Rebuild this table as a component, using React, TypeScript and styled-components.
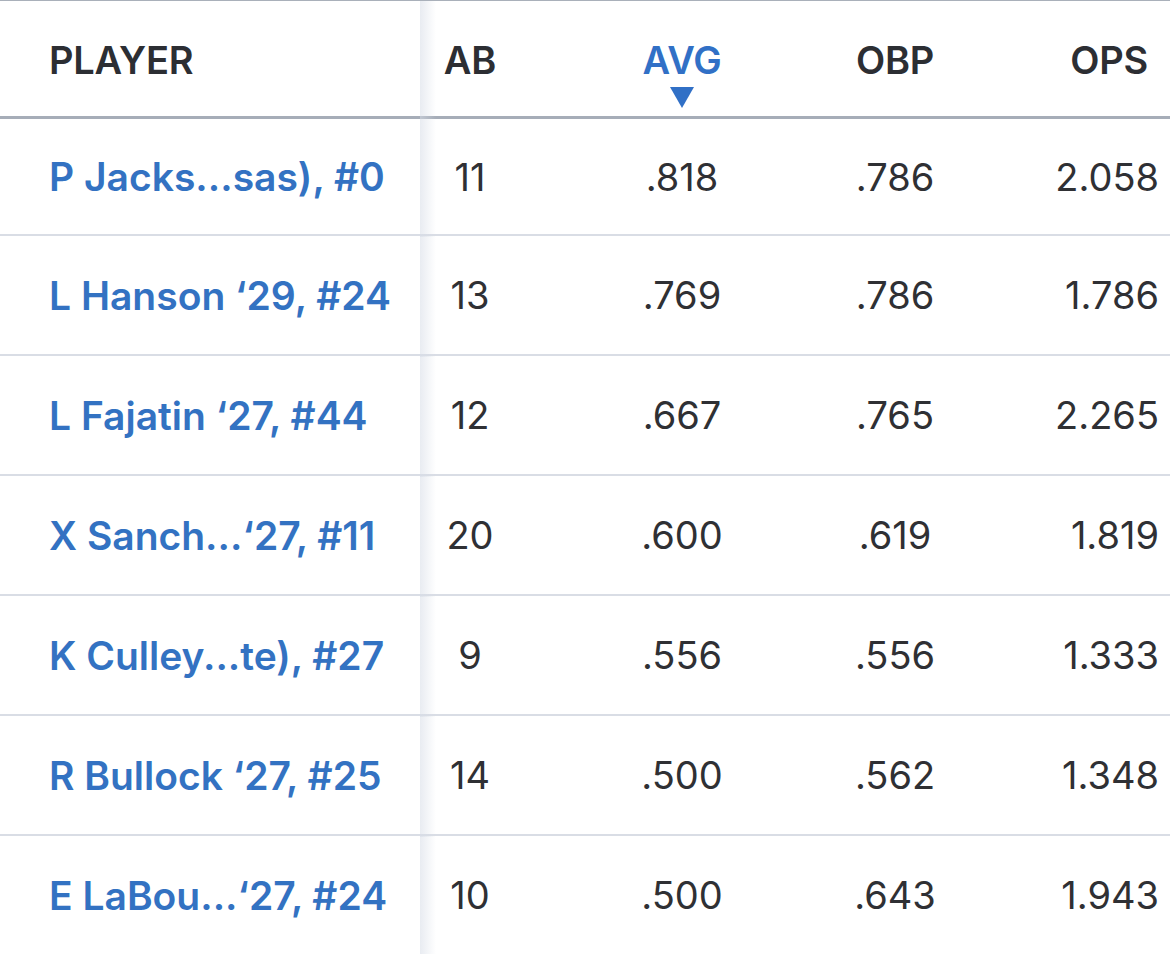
import React from "react";
import styled, { createGlobalStyle } from "styled-components";

const GlobalStyle = createGlobalStyle`
  html, body {
    margin: 0;
    padding: 0;
    background: #ffffff;
  }
  body {
    font-family: Inter, "Noto Sans", "Liberation Sans", sans-serif;
    -webkit-font-smoothing: antialiased;
  }
`;

const COLUMNS = "420px 100px 324px 102px 1fr";

type Row = {
  name: string;
  ab: string;
  avg: string;
  obp: string;
  ops: string;
};

const rows: Row[] = [
  { name: "P Jacks...sas), #0", ab: "11", avg: ".818", obp: ".786", ops: "2.058" },
  { name: "L Hanson \u201829, #24", ab: "13", avg: ".769", obp: ".786", ops: "1.786" },
  { name: "L Fajatin \u201827, #44", ab: "12", avg: ".667", obp: ".765", ops: "2.265" },
  { name: "X Sanch...\u201827, #11", ab: "20", avg: ".600", obp: ".619", ops: "1.819" },
  { name: "K Culley...te), #27", ab: "9", avg: ".556", obp: ".556", ops: "1.333" },
  { name: "R Bullock \u201827, #25", ab: "14", avg: ".500", obp: ".562", ops: "1.348" },
  { name: "E LaBou...\u201827, #24", ab: "10", avg: ".500", obp: ".643", ops: "1.943" },
];

const Table = styled.div`
  width: 1170px;
  height: 954px;
  overflow: hidden;
  border-top: 1px solid #a9b0ba;
  background: #ffffff;
`;

const HeaderRow = styled.div`
  display: grid;
  grid-template-columns: ${COLUMNS};
  height: 115px;
  border-bottom: 3px solid #a6adb8;
`;

const BodyRow = styled.div`
  display: grid;
  grid-template-columns: ${COLUMNS};
  height: 118px;
  border-bottom: 2px solid #d9dde5;

  &:nth-child(2) {
    height: 115px;
  }
`;

const Cell = styled.div<{ $align?: "left" | "center" | "right"; $pad?: number }>`
  display: flex;
  align-items: center;
  justify-content: ${(p) =>
    p.$align === "left" ? "flex-start" : p.$align === "right" ? "flex-end" : "center"};
  padding: ${(p) =>
    p.$align === "left"
      ? `0 0 0 ${p.$pad ?? 49}px`
      : p.$align === "right"
      ? `0 ${p.$pad ?? 11}px 0 0`
      : "0"};
  position: relative;
  white-space: nowrap;
`;

const PlayerCell = styled(Cell)`
  &::after {
    content: "";
    position: absolute;
    top: 0;
    bottom: -3px;
    right: -16px;
    width: 16px;
    background: linear-gradient(to right, rgba(214, 220, 230, 0.55), rgba(255, 255, 255, 0));
    pointer-events: none;
    z-index: 1;
  }
`;

const HeadLabel = styled.span<{ $active?: boolean }>`
  position: relative;
  font-size: 38px;
  font-weight: 600;
  letter-spacing: -0.2px;
  color: ${(p) => (p.$active ? "#3170c6" : "#2c2e33")};
  padding-top: 3px;
`;

const SortArrow = styled.span`
  position: absolute;
  left: 50%;
  top: 100%;
  margin-top: 4px;
  transform: translateX(-50%);
  width: 0;
  height: 0;
  border-left: 12px solid transparent;
  border-right: 12px solid transparent;
  border-top: 21px solid #3170c6;
`;

const PlayerLink = styled.a`
  font-size: 39px;
  font-weight: 600;
  color: #3372c2;
  text-decoration: none;
  letter-spacing: 0;
`;

const Stat = styled.span`
  font-size: 38px;
  font-weight: 400;
  color: #2f3034;
  letter-spacing: 0;
`;

export default function App() {
  return (
    <>
      <GlobalStyle />
      <Table>
        <HeaderRow>
          <PlayerCell $align="left">
            <HeadLabel>PLAYER</HeadLabel>
          </PlayerCell>
          <Cell>
            <HeadLabel>AB</HeadLabel>
          </Cell>
          <Cell>
            <HeadLabel $active>
              AVG
              <SortArrow />
            </HeadLabel>
          </Cell>
          <Cell>
            <HeadLabel>OBP</HeadLabel>
          </Cell>
          <Cell $align="right" $pad={22}>
            <HeadLabel>OPS</HeadLabel>
          </Cell>
        </HeaderRow>
        {rows.map((r) => (
          <BodyRow key={r.name}>
            <PlayerCell $align="left">
              <PlayerLink href="#">{r.name}</PlayerLink>
            </PlayerCell>
            <Cell>
              <Stat>{r.ab}</Stat>
            </Cell>
            <Cell>
              <Stat>{r.avg}</Stat>
            </Cell>
            <Cell>
              <Stat>{r.obp}</Stat>
            </Cell>
            <Cell $align="right">
              <Stat>{r.ops}</Stat>
            </Cell>
          </BodyRow>
        ))}
      </Table>
    </>
  );
}
